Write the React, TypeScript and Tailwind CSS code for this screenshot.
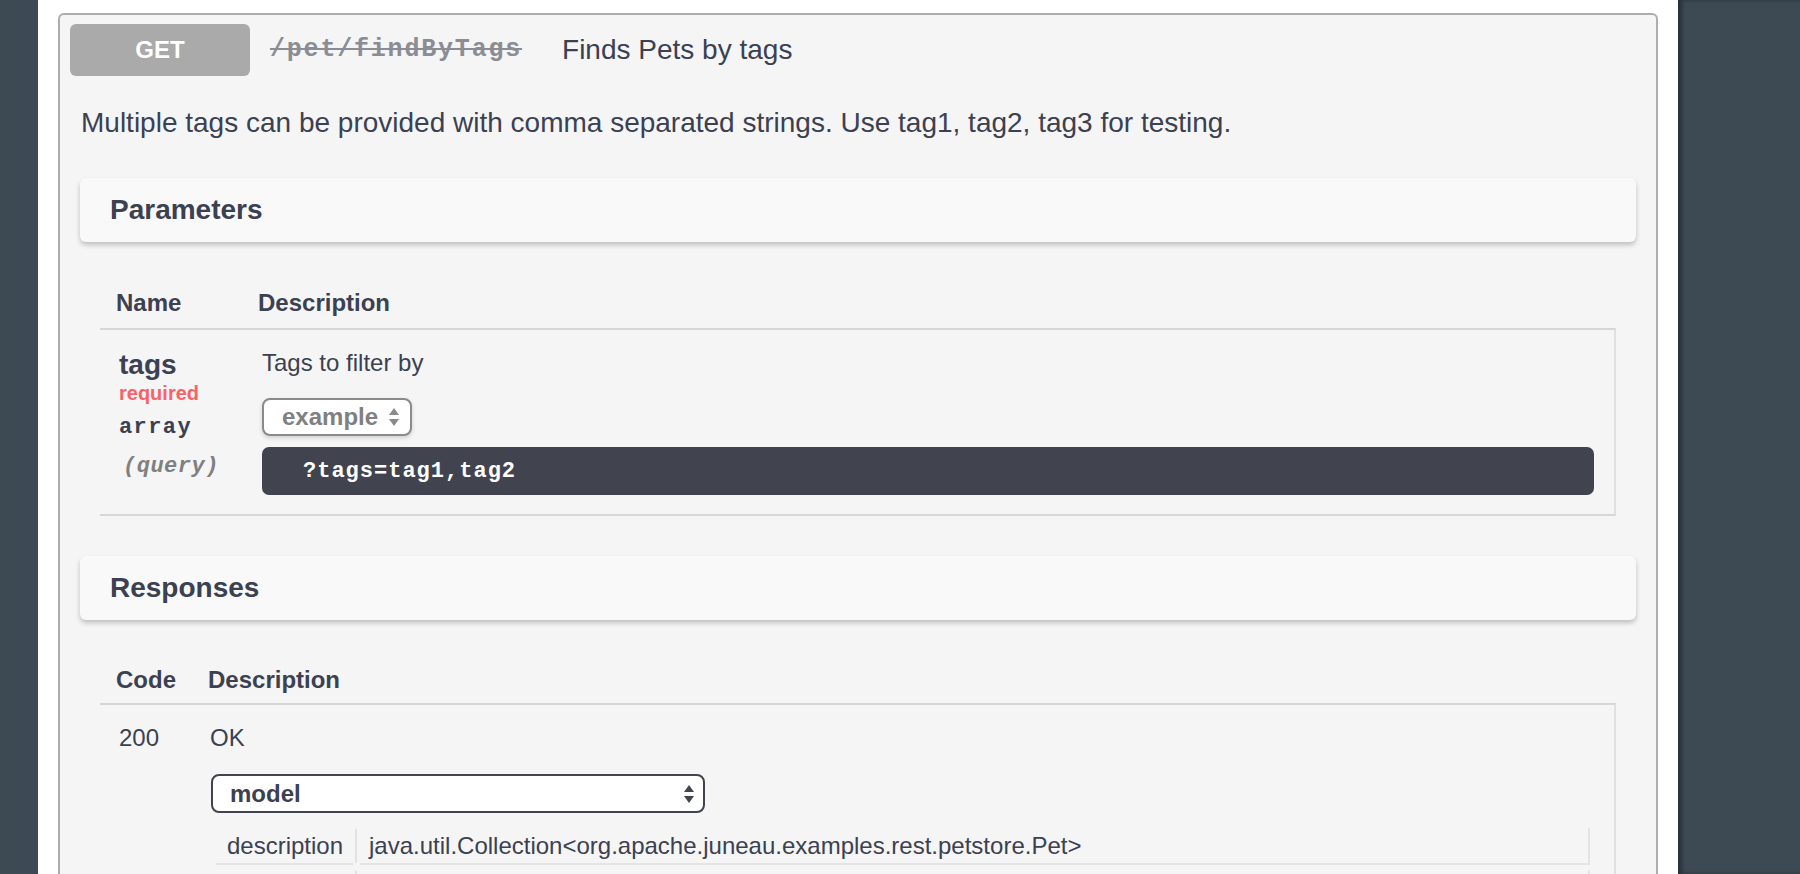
const sans = "font-['Liberation_Sans',Arial,sans-serif]";
const mono = "font-['Liberation_Mono','Courier_New',monospace]";

const Arrows = ({ color }: { color: string }) => (
  <svg width="12" height="22" viewBox="0 0 12 22">
    <path d="M6 2 L11 9 H1 Z" fill={color} />
    <path d="M6 20 L11 13 H1 Z" fill={color} />
  </svg>
);

const ModelRow = ({ name, value }: { name: string; value: string }) => (
  <div className="flex items-stretch">
    <div className="w-[137px] h-[37px] border-b-2 border-[#e4e4e6] flex items-center pl-[11px] text-[24px]">
      {name}
    </div>
    <div className="w-[7px] pl-[2px] pt-[1px]">
      <div className="w-[2px] h-[34px] bg-[#e2e2e4]" />
    </div>
    <div className="flex-1 h-[37px] border-b-2 border-r-2 border-[#e4e4e6] flex items-center pl-[9px] text-[24px]">
      {value}
    </div>
  </div>
);

export default function App() {
  return (
    <div className={`flex h-[874px] w-full overflow-hidden bg-[#3d4a54] ${sans} text-[#3b4151]`}>
      <div className="w-[38px] shrink-0 bg-[#3d4a54]" />

      <div className="w-[1640px] shrink-0 bg-white px-[20px] pt-[13px]">
        <div className="border-2 border-[#adadad] rounded-[6px] bg-[#f5f5f5] h-[900px]">
          {/* summary */}
          <div className="flex items-center pt-[9px] pl-[10px]">
            <div className="w-[180px] h-[52px] rounded-[6px] bg-[#aaaaaa] flex items-center justify-center text-white text-[24px] font-bold">
              GET
            </div>
            <div className={`ml-[20px] ${mono} text-[25px] font-bold tracking-[1.8px] text-[#8a8d94] line-through`}>
              /pet/findByTags
            </div>
            <div className="ml-[40px] text-[28px]">Finds Pets by tags</div>
          </div>

          <p className="mt-[27px] pl-[21px] text-[28px] leading-[40px]">
            Multiple tags can be provided with comma separated strings. Use tag1, tag2, tag3 for testing.
          </p>

          {/* parameters */}
          <div className="mt-[35px] mx-[20px] h-[64px] rounded-[6px] bg-[#f9f9f9] shadow-[0_3px_5px_rgba(0,0,0,0.22)] flex items-center pl-[30px]">
            <h4 className="text-[28px] font-bold">Parameters</h4>
          </div>

          <div className="mx-[40px]">
            <div className="h-[86px] flex items-end pb-[11px] text-[24px] font-bold leading-[28px]">
              <div className="w-[158px] pl-[16px]">Name</div>
              <div>Description</div>
            </div>
            <div className="border-t-2 border-b-2 border-[#d6d6da] border-r-2 border-r-[#e0e0e3] flex pt-[19px] pb-[19px]">
              <div className="w-[162px] pl-[19px] flex flex-col">
                <div className="text-[28px] font-bold leading-[32px]">tags</div>
                <div className="text-[20px] font-bold leading-[24px] text-[#fa6268]">required</div>
                <div className={`mt-[9px] ${mono} text-[22px] font-bold tracking-[1.4px] leading-[28px]`}>array</div>
                <div className={`mt-[11px] ${mono} text-[22px] font-bold italic tracking-[0.5px] leading-[28px] text-[#808080] pl-[4px]`}>
                  (query)
                </div>
              </div>
              <div className="flex-1 pr-[20px]">
                <div className="text-[24px] leading-[28px]">Tags to filter by</div>
                <div className="mt-[21px] w-[150px] h-[38px] border-2 border-[#8a8a8a] rounded-[8px] bg-white shadow-[0_2px_4px_rgba(0,0,0,0.15)] flex items-center pl-[18px] gap-[10px]">
                  <span className="text-[24px] font-bold text-[#808080]">example</span>
                  <Arrows color="#8a8a8a" />
                </div>
                <div className="mt-[11px] h-[48px] rounded-[7px] bg-[#41444e] flex items-center pl-[41px]">
                  <span className={`${mono} text-[22px] font-bold tracking-[1px] text-white`}>?tags=tag1,tag2</span>
                </div>
              </div>
            </div>
          </div>

          {/* responses */}
          <div className="mt-[40px] mx-[20px] h-[64px] rounded-[6px] bg-[#f9f9f9] shadow-[0_3px_5px_rgba(0,0,0,0.22)] flex items-center pl-[30px]">
            <h4 className="text-[28px] font-bold">Responses</h4>
          </div>

          <div className="mx-[40px]">
            <div className="h-[83px] flex items-end pb-[9px] text-[24px] font-bold leading-[28px]">
              <div className="w-[108px] pl-[16px]">Code</div>
              <div>Description</div>
            </div>
            <div className="border-t-2 border-[#d6d6da] border-r-2 border-r-[#e0e0e3] flex pt-[19px] h-[300px]">
              <div className="w-[108px] pl-[19px] text-[24px] leading-[28px]">200</div>
              <div className="flex-1 pr-[24px]">
                <div className="text-[24px] leading-[28px] pl-[2px]">OK</div>
                <div className="mt-[22px] ml-[3px] w-[494px] h-[39px] border-2 border-[#41444e] rounded-[8px] bg-white flex items-center justify-between pl-[17px] pr-[8px]">
                  <span className="text-[24px] font-bold">model</span>
                  <Arrows color="#41444e" />
                </div>
                <div className="mt-[15px] ml-[8px]">
                  <ModelRow name="description" value="java.util.Collection<org.apache.juneau.examples.rest.petstore.Pet>" />
                  <div className="mt-[5px]">
                    <ModelRow name="" value="" />
                  </div>
                </div>
              </div>
            </div>
          </div>
        </div>
      </div>

      <div className="flex-1 bg-[#3d4a54] shadow-[inset_4px_0_4px_rgba(0,0,0,0.35)]" />
    </div>
  );
}
